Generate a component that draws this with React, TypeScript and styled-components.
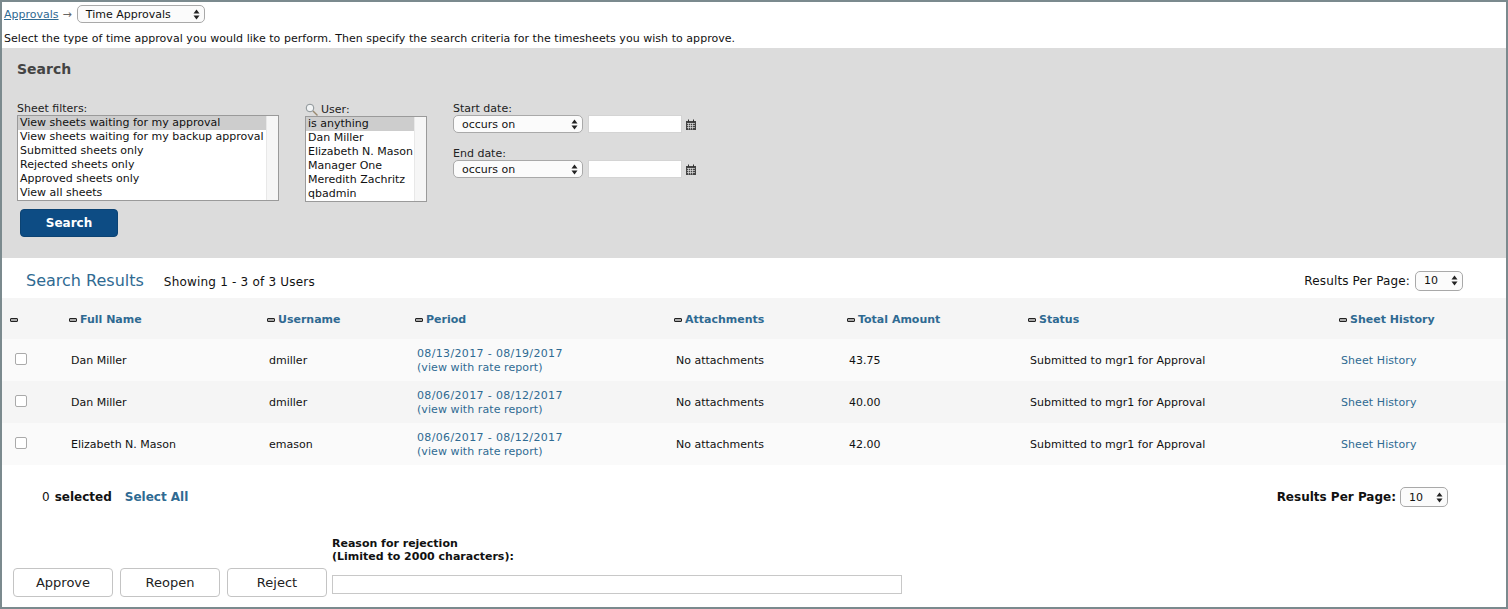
import styled, { createGlobalStyle } from 'styled-components';

const GlobalStyle = createGlobalStyle`
  html, body { margin: 0; padding: 0; background: #fff; }
  body { font-family: "DejaVu Sans", Verdana, sans-serif; font-size: 11px; color: #111; }
`;

// ─── Page frame ─────────────────────────────────────────────────────

const Frame = styled.div`
  box-sizing: border-box;
  width: 1508px;
  height: 609px;
  border: 2px solid #7b8a8e;
  overflow: hidden;
`;

const Crumbs = styled.div`
  display: flex;
  align-items: center;
  height: 24px;
  padding-left: 2px;
  gap: 4px;
`;

const CrumbLink = styled.a`
  color: #2f6a92;
  text-decoration: underline;
  font-size: 11px;
`;

const Arrow = styled.span`
  margin-right: 1px;
  color: #666;
  font-size: 11px;
`;

const Intro = styled.div`
  height: 22px;
  padding: 6px 0 0 2px;
  box-sizing: border-box;
  font-size: 11px;
  line-height: 14px;
  letter-spacing: .04px;
`;

// ─── Dropdown ───────────────────────────────────────────────────────

const Drop = styled.div<{ $w: number; $h?: number }>`
  box-sizing: border-box;
  display: flex;
  align-items: center;
  justify-content: space-between;
  width: ${({ $w }) => $w}px;
  height: ${({ $h }) => $h ?? 18}px;
  padding: 0 4px 0 8px;
  border: 1px solid #a9a9a9;
  border-radius: 5px;
  background: #fbfbfb;
  font-size: 11px;
  color: #111;
`;

const Updown = () => (
  <svg width="7" height="11" viewBox="0 0 7 11">
    <path d="M3.5 0.5 L6.5 4.5 H0.5 Z M3.5 10.5 L6.5 6.5 H0.5 Z" fill="#222" />
  </svg>
);

// ─── Search panel ───────────────────────────────────────────────────

const SearchPanel = styled.section`
  box-sizing: border-box;
  height: 210px;
  padding: 13px 15px 0;
  background: #dcdcdc;
`;

const PanelTitle = styled.h2`
  margin: 0;
  height: 17px;
  font-size: 14px;
  line-height: 17px;
  font-weight: bold;
  color: #444;
`;

const Filters = styled.div`
  display: flex;
  margin-top: 24px;
`;

const FilterCol = styled.div<{ $w: number; $top?: number }>`
  width: ${({ $w }) => $w}px;
  padding-top: ${({ $top }) => $top ?? 0}px;
  flex: none;
`;

const FieldLabel = styled.div`
  display: flex;
  align-items: center;
  gap: 3px;
  height: 13px;
  font-size: 11px;
  line-height: 14px;
  color: #222;
`;

const ListBox = styled.div<{ $w: number; $bar: number }>`
  box-sizing: border-box;
  display: flex;
  width: ${({ $w }) => $w}px;
  height: 86px;
  border: 1px solid #9a9a9a;
  background: #fff;
  &::after {
    content: '';
    flex: none;
    width: ${({ $bar }) => $bar}px;
    background: #f6f6f6;
    border-left: 1px solid #e8e8e8;
  }
`;

const ListItems = styled.div`
  flex: 1;
  min-width: 0;
`;

const ListItem = styled.div<{ $on?: boolean }>`
  height: 14px;
  padding-left: 2px;
  font-size: 11px;
  line-height: 14px;
  white-space: nowrap;
  background: ${({ $on }) => ($on ? '#cdcdcd' : 'transparent')};
`;

const SearchButton = styled.button`
  display: block;
  width: 98px;
  height: 28px;
  margin: 8px 0 0 3px;
  border: 1px solid #0c4373;
  border-radius: 4px;
  background: #0d4c84;
  color: #fff;
  font-family: inherit;
  font-size: 12px;
  font-weight: bold;
`;

const DateField = styled.div`
  margin-bottom: 14px;
`;

const DateRow = styled.div`
  display: flex;
  align-items: center;
`;

const DateInput = styled.input`
  box-sizing: border-box;
  width: 94px;
  height: 18px;
  margin: 0 4px 0 5px;
  padding: 0 3px;
  border: 1px solid #d4d4d4;
  background: #fff;
`;

const Calendar = () => (
  <svg width="10" height="11" viewBox="0 0 10 11">
    <path d="M0 2 H10 V11 H0 Z" fill="#444" />
    <path d="M2 0.5 H3 V3 H2 Z M7 0.5 H8 V3 H7 Z" fill="#333" />
    <path
      d="M1 4.5 H9 M1 6.5 H9 M1 8.5 H9 M2.5 4 V10.5 M4.5 4 V10.5 M6.5 4 V10.5"
      stroke="#ddd"
      strokeWidth="0.7"
    />
  </svg>
);

const Magnifier = () => (
  <svg width="13" height="13" viewBox="0 0 13 13" fill="none">
    <circle cx="5" cy="5" r="3.8" stroke="#8a9296" strokeWidth="1" fill="#f2f4f5" />
    <path d="M8 8 L12.5 12.5" stroke="#9a8a70" strokeWidth="1.4" />
  </svg>
);

// ─── Results ────────────────────────────────────────────────────────

const ResultsHead = styled.div`
  box-sizing: border-box;
  display: flex;
  align-items: center;
  height: 40px;
  padding: 5px 43px 0 24px;
`;

const ResultsTitle = styled.h3`
  margin: 0 20px 0 0;
  font-size: 16px;
  font-weight: normal;
  color: #2f6a92;
`;

const Showing = styled.span`
  flex: 1;
  padding-top: 2px;
  font-size: 12px;
  letter-spacing: .2px;
`;

const PerPageLabel = styled.span<{ $bold?: boolean }>`
  margin-right: ${({ $bold }) => ($bold ? 4 : 5)}px;
  font-size: 12px;
  font-weight: ${({ $bold }) => ($bold ? 'bold' : 'normal')};
  letter-spacing: ${({ $bold }) => ($bold ? 0 : '.15px')};
`;

const Table = styled.table`
  width: 1504px;
  table-layout: fixed;
  border-collapse: collapse;
`;

const HeadRow = styled.tr`
  height: 41px;
  background: #f5f5f5;
`;

const HeadCell = styled.th<{ $pad?: number }>`
  padding: 2px 0 0 ${({ $pad }) => $pad ?? 2}px;
  text-align: left;
  font-size: 11px;
  font-weight: bold;
  color: #2f6a92;
  white-space: nowrap;
`;

const Minus = styled.span`
  display: inline-block;
  box-sizing: border-box;
  width: 8px;
  height: 4px;
  margin-right: 3px;
  border: 1px solid #222;
  border-radius: 1px;
  background: #aaa;
  vertical-align: 1px;
`;

const BodyRow = styled.tr<{ $alt?: boolean }>`
  height: 42px;
  background: ${({ $alt }) => ($alt ? '#f5f5f5' : '#fafafa')};
`;

const BodyCell = styled.td`
  padding: 2px 0 0 4px;
  font-size: 11px;
  line-height: 14px;
  white-space: nowrap;
`;

const TickCell = styled(BodyCell)`
  padding: 0 0 0 13px;
`;

const Tick = styled.span`
  display: block;
  box-sizing: border-box;
  width: 12px;
  height: 12px;
  margin-top: -2px;
  border: 1px solid #aaa;
  border-radius: 2px;
  background: #fff;
`;

const TableLink = styled.a<{ $spread?: number }>`
  display: block;
  color: #2f6a92;
  letter-spacing: ${({ $spread }) => $spread ?? 0.08}px;
`;

// ─── Footer ─────────────────────────────────────────────────────────

const SelectedRow = styled.div`
  box-sizing: border-box;
  display: flex;
  align-items: center;
  height: 32px;
  margin-top: 16px;
  padding: 0 58px 0 40px;
  font-size: 12px;
`;

const Bold = styled.b`
  margin-left: 5px;
`;

const SelectAll = styled.a`
  flex: 1;
  margin-left: 13px;
  color: #2f6a92;
  font-weight: bold;
`;

const Actions = styled.div`
  display: flex;
  align-items: flex-end;
  margin-top: 24px;
  padding-left: 11px;
  gap: 7px;
`;

const ActionButton = styled.button`
  box-sizing: border-box;
  width: 100px;
  height: 29px;
  border: 1px solid #c4c4c4;
  border-radius: 4px;
  background: #fff;
  color: #222;
  font-family: inherit;
  font-size: 13px;
`;

const Reason = styled.div`
  margin-left: -2px;
  margin-bottom: 3px;
`;

const ReasonLabel = styled.div`
  margin-bottom: 12px;
  font-size: 11px;
  line-height: 13px;
  font-weight: bold;
`;

const ReasonInput = styled.input`
  display: block;
  box-sizing: border-box;
  width: 570px;
  height: 19px;
  border: 1px solid #c8c8c8;
  background: #fff;
`;

// ─── Data ───────────────────────────────────────────────────────────

const filters = [
  'View sheets waiting for my approval',
  'View sheets waiting for my backup approval',
  'Submitted sheets only',
  'Rejected sheets only',
  'Approved sheets only',
  'View all sheets',
];
const users = ['is anything', 'Dan Miller', 'Elizabeth N. Mason', 'Manager One', 'Meredith Zachritz', 'qbadmin'];
const columns = ['', 'Full Name', 'Username', 'Period', 'Attachments', 'Total Amount', 'Status', 'Sheet History'];
const widths = [65, 198, 148, 259, 173, 181, 311, 169];
const rows = [
  { name: 'Dan Miller', user: 'dmiller', period: '08/13/2017 - 08/19/2017', total: '43.75' },
  { name: 'Dan Miller', user: 'dmiller', period: '08/06/2017 - 08/12/2017', total: '40.00' },
  { name: 'Elizabeth N. Mason', user: 'emason', period: '08/06/2017 - 08/12/2017', total: '42.00' },
];

export default function App() {
  return (
    <>
      <GlobalStyle />
      <Frame>
        <Crumbs>
          <CrumbLink>Approvals</CrumbLink>
          <Arrow>→</Arrow>
          <Drop $w={128}>
            Time Approvals
            <Updown />
          </Drop>
        </Crumbs>
        <Intro>
          Select the type of time approval you would like to perform. Then specify the search criteria for the
          timesheets you wish to approve.
        </Intro>

        <SearchPanel>
          <PanelTitle>Search</PanelTitle>
          <Filters>
            <FilterCol $w={288}>
              <FieldLabel>Sheet filters:</FieldLabel>
              <ListBox $w={262} $bar={11}>
                <ListItems>
                  {filters.map((f, i) => (
                    <ListItem key={f} $on={i === 0}>{f}</ListItem>
                  ))}
                </ListItems>
              </ListBox>
              <SearchButton>Search</SearchButton>
            </FilterCol>
            <FilterCol $w={148} $top={1}>
              <FieldLabel>
                <Magnifier />
                User:
              </FieldLabel>
              <ListBox $w={122} $bar={11}>
                <ListItems>
                  {users.map((u, i) => (
                    <ListItem key={u} $on={i === 0}>{u}</ListItem>
                  ))}
                </ListItems>
              </ListBox>
            </FilterCol>
            <FilterCol $w={260}>
              {['Start date:', 'End date:'].map(label => (
                <DateField key={label}>
                  <FieldLabel>{label}</FieldLabel>
                  <DateRow>
                    <Drop $w={130}>
                      occurs on
                      <Updown />
                    </Drop>
                    <DateInput />
                    <Calendar />
                  </DateRow>
                </DateField>
              ))}
            </FilterCol>
          </Filters>
        </SearchPanel>

        <ResultsHead>
          <ResultsTitle>Search Results</ResultsTitle>
          <Showing>Showing 1 - 3 of 3 Users</Showing>
          <PerPageLabel>Results Per Page:</PerPageLabel>
          <Drop $w={48} $h={20}>
            10
            <Updown />
          </Drop>
        </ResultsHead>

        <Table>
          <colgroup>
            {widths.map((w, i) => (
              <col key={i} width={w} />
            ))}
          </colgroup>
          <thead>
            <HeadRow>
              {columns.map((c, i) => (
                <HeadCell key={i} $pad={i === 0 ? 8 : undefined}>
                  <Minus />
                  {c}
                </HeadCell>
              ))}
            </HeadRow>
          </thead>
          <tbody>
            {rows.map((r, i) => (
              <BodyRow key={i} $alt={i === 1}>
                <TickCell>
                  <Tick />
                </TickCell>
                <BodyCell>{r.name}</BodyCell>
                <BodyCell>{r.user}</BodyCell>
                <BodyCell>
                  <TableLink $spread={0.35}>{r.period}</TableLink>
                  <TableLink>(view with rate report)</TableLink>
                </BodyCell>
                <BodyCell>No attachments</BodyCell>
                <BodyCell>{r.total}</BodyCell>
                <BodyCell>Submitted to mgr1 for Approval</BodyCell>
                <BodyCell>
                  <TableLink>Sheet History</TableLink>
                </BodyCell>
              </BodyRow>
            ))}
          </tbody>
        </Table>

        <SelectedRow>
          0<Bold>selected</Bold>
          <SelectAll>Select All</SelectAll>
          <PerPageLabel $bold>Results Per Page:</PerPageLabel>
          <Drop $w={48} $h={20}>
            10
            <Updown />
          </Drop>
        </SelectedRow>

        <Actions>
          <ActionButton>Approve</ActionButton>
          <ActionButton>Reopen</ActionButton>
          <ActionButton>Reject</ActionButton>
          <Reason>
            <ReasonLabel>
              Reason for rejection
              <br />
              (Limited to 2000 characters):
            </ReasonLabel>
            <ReasonInput />
          </Reason>
        </Actions>
      </Frame>
    </>
  );
}
